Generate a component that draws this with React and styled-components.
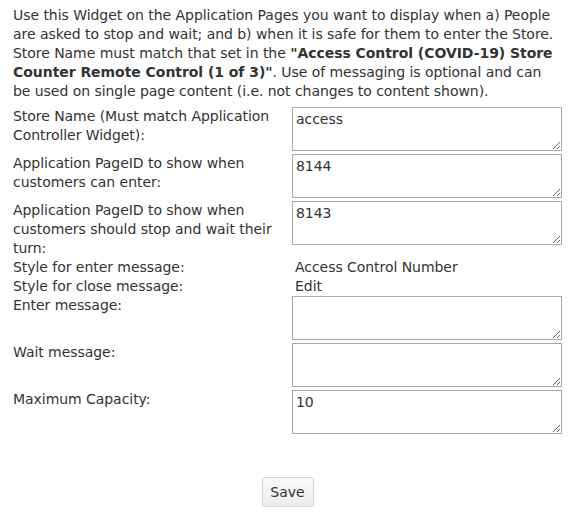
import React from 'react'
import styled, { createGlobalStyle } from 'styled-components'

const GlobalStyle = createGlobalStyle`
  body {
    margin: 0;
    background: #fff;
    font-family: Verdana, "DejaVu Sans", sans-serif;
    font-size: 14px;
    letter-spacing: -0.05px;
    color: #333;
  }
`

const fields = [
  { label: ['Store Name (Must match Application', 'Controller Widget):'], value: 'access' },
  { label: ['Application PageID to show when', 'customers can enter:'], value: '8144' },
  {
    label: ['Application PageID to show when', 'customers should stop and wait their', 'turn:'],
    value: '8143',
  },
  { label: ['Style for enter message:'], text: 'Access Control Number' },
  { label: ['Style for close message:'], text: 'Edit' },
  { label: ['Enter message:'], value: '' },
  { label: ['Wait message:'], value: '' },
  { label: ['Maximum Capacity:'], value: '10' },
]

function Lines({ lines }) {
  return lines.map((line, i) => (
    <React.Fragment key={i}>
      {i > 0 && <br />}
      {line}
    </React.Fragment>
  ))
}

function App() {
  return (
    <>
      <GlobalStyle />
      <Container>
        <Intro>
          Use this Widget on the Application Pages you want to display when a) People
          <br />
          are asked to stop and wait; and b) when it is safe for them to enter the Store.
          <br />
          Store Name must match that set in the <strong>"Access Control (COVID-19) Store</strong>
          <br />
          <strong>Counter Remote Control (1 of 3)"</strong>. Use of messaging is optional and can
          <br />
          be used on single page content (i.e. not changes to content shown).
        </Intro>
        <Form>
          {fields.map((f) => (
            <React.Fragment key={f.label[0] + f.label.length}>
              <Label>
                <Lines lines={f.label} />
              </Label>
              {f.text ? <Value>{f.text}</Value> : <Field defaultValue={f.value} />}
            </React.Fragment>
          ))}
        </Form>
        <Actions>
          <SaveButton>Save</SaveButton>
        </Actions>
      </Container>
    </>
  )
}

const Container = styled.div`
  width: 549px;
  padding: 6px 9px 0 13px;
`

const Intro = styled.p`
  margin: 0 0 6px;
  line-height: 19px;
  white-space: nowrap;
  strong {
    font-weight: bold;
  }
`

const Form = styled.div`
  display: grid;
  grid-template-columns: 279px 270px;
  align-items: start;
`

const Label = styled.div`
  line-height: 19px;
  white-space: nowrap;
`

const Value = styled.div`
  line-height: 19px;
  padding-left: 3px;
`

const Field = styled.textarea`
  display: block;
  box-sizing: border-box;
  width: 270px;
  height: 44px;
  margin: 0 0 3px;
  padding: 2px 3px;
  border: 1px solid #a9a9a9;
  font-family: Verdana, "DejaVu Sans", sans-serif;
  font-size: 14px;
  letter-spacing: -0.05px;
  line-height: 19px;
  color: #333;
  resize: vertical;
`

const Actions = styled.div`
  display: flex;
  justify-content: center;
  padding-top: 40px;
`

const SaveButton = styled.button`
  width: 52px;
  height: 30px;
  padding: 0;
  border: 1px solid #d4d4d4;
  border-radius: 3px;
  background: linear-gradient(#fafafa, #ececec);
  font-family: Verdana, "DejaVu Sans", sans-serif;
  font-size: 14px;
  color: #333;
  cursor: pointer;
`

export default App
